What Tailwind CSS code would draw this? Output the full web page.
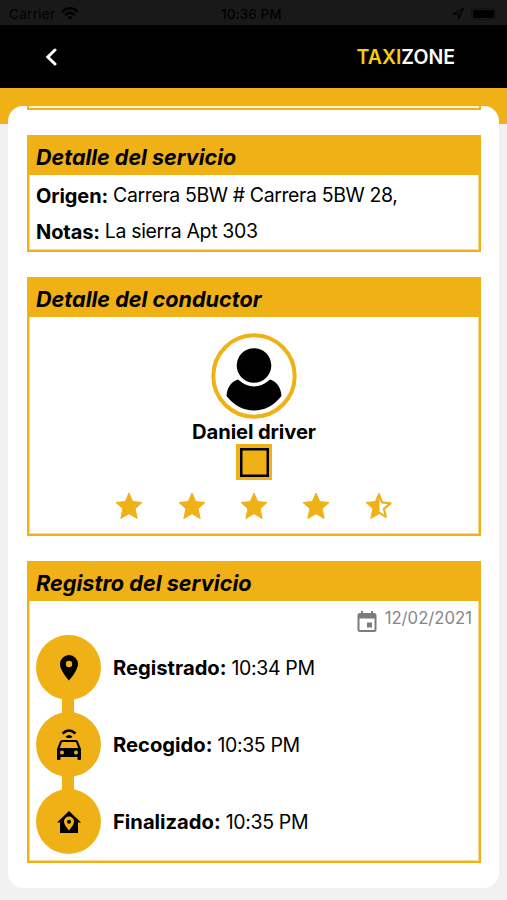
<!DOCTYPE html>
<html lang="es">
<head>
<meta charset="utf-8">
<title>TaxiZone</title>
<script src="https://cdn.jsdelivr.net/npm/@tailwindcss/browser@4"></script>
</head>
<body class="w-[507px] h-[900px] overflow-hidden bg-[#f1f1f1] font-['Inter','Liberation_Sans',sans-serif] text-black">
<div class="relative h-[25px] bg-[#191919] flex items-center justify-between pl-[9px] pr-[9px] pt-[3px] text-[13.5px] text-black">
  <div class="flex items-center gap-[6px]">
    <span class="tracking-[0.3px]">Carrier</span>
    <svg width="18" height="14" viewBox="0 0 18 14" fill="none" stroke="#000" stroke-width="2.5"><path d="M1 5Q9 -2.400 17 5M4 8.200Q9 3.500 14 8.200"/><path d="M6.300 10.300Q9 8.400 11.700 10.300L9 13Z" fill="#000" stroke="none"/></svg>
  </div>
  <span class="absolute left-[221px] font-medium tracking-[0.1px] whitespace-nowrap">10:36 PM</span>
  <div class="flex items-center gap-[7px]">
    <svg width="12" height="12" viewBox="0 0 12 12" fill="none" stroke="#000" stroke-width="1.200"><path d="M1 6L11 1L6.500 11V6Z"/></svg>
    <svg width="27" height="12" viewBox="0 0 27 12"><rect x=".5" y=".5" width="24" height="11" rx="3" fill="none" stroke="#121212"/><rect x="2" y="2" width="21" height="8" rx="1.500"/><path d="M25.500 4Q27 6 25.500 8Z" fill="#121212"/></svg>
  </div>
</div>
<header class="h-[63px] bg-black flex items-center justify-between pl-[45px] pr-[52px]">
  <svg width="12" height="18" viewBox="0 0 12 18" fill="none" stroke="#fff" stroke-width="3" stroke-linecap="round"><path d="M10 2L2.800 9L10 16"/></svg>
  <div class="pt-[2px] text-[19.500px] leading-none font-semibold text-white"><span class="text-[#f5cd13]">TAXI</span>ZONE</div>
</header>
<div class="h-[36px] bg-[#f0b117] px-[8px] pt-[18px]">
  <main class="h-[782px] bg-white rounded-[15px] px-[19px] overflow-hidden">
    <div class="h-[4px] w-[454px] border-x-[2px] border-b-[2px] border-[#f0b117] bg-[#fff3cf]"></div>
    <section class="mt-[25px] h-[117px] w-[454px] border-2 border-[#f0b117] shadow-[inset_0_0_0_1px_#f8d98e]">
      <h2 class="h-[38px] bg-[#f0b117] pl-[7px] pt-[2px] flex items-center text-[21.500px] font-bold italic whitespace-nowrap">Detalle del servicio</h2>
      <p class="mt-[2px] h-[37px] pl-[7px] flex items-center gap-[5px] text-[20px] whitespace-nowrap"><b class="font-bold tracking-[-0.1px]">Origen:</b><span class="text-[19.500px] tracking-[-0.390px]">Carrera 5BW # Carrera 5BW 28,</span></p>
      <p class="h-[36px] pl-[7px] flex items-center gap-[5px] text-[20px] whitespace-nowrap"><b class="font-bold tracking-[-0.1px]">Notas:</b><span class="text-[19.500px] tracking-[-0.360px]">La sierra Apt 303</span></p>
    </section>
    <section class="mt-[25px] h-[259px] w-[454px] border-2 border-[#f0b117] shadow-[inset_0_0_0_1px_#f8d98e]">
      <h2 class="h-[38px] bg-[#f0b117] pl-[7px] pt-[2px] flex items-center text-[21.600px] font-bold italic whitespace-nowrap">Detalle del conductor</h2>
      <div class="flex flex-col items-center pt-[16px]">
        <svg width="86" height="86" viewBox="0 0 86 86"><circle cx="43" cy="43" r="40.700" fill="#fff" stroke="#f0b117" stroke-width="4"/><circle cx="43" cy="32.500" r="17.300"/><path d="M27 46.500Q43 60.500 59 46.500C66 48.500 70 55 70.500 63Q59 77.500 43 77.500T15.500 63C16 55 20 48.500 27 46.500Z"/></svg>
        <div class="mt-px h-[24px] leading-[24px] text-[20.200px] font-bold tracking-[-0.1px] whitespace-nowrap">Daniel driver</div>
        <div class="size-[36px] bg-[#f0b117] grid place-items-center"><div class="size-[29px] border-2 border-black shadow-[inset_0_0_0_0.5px_black]"></div></div>
        <div class="mt-[12px] flex gap-[34.300px]">
          <svg width="28" height="28" viewBox="0 0 28 28" fill="#f0b117" stroke="#f0b117" stroke-linejoin="round"><path d="M14 1L17.700 9.600L27 10.500L20.100 16.700L22.200 26.500L14 21.700L5.800 26.500L7.900 16.700L1 10.500L10.300 9.600Z"/></svg>
          <svg width="28" height="28" viewBox="0 0 28 28" fill="#f0b117" stroke="#f0b117" stroke-linejoin="round"><path d="M14 1L17.700 9.600L27 10.500L20.100 16.700L22.200 26.500L14 21.700L5.800 26.500L7.900 16.700L1 10.500L10.300 9.600Z"/></svg>
          <svg width="28" height="28" viewBox="0 0 28 28" fill="#f0b117" stroke="#f0b117" stroke-linejoin="round"><path d="M14 1L17.700 9.600L27 10.500L20.100 16.700L22.200 26.500L14 21.700L5.800 26.500L7.900 16.700L1 10.500L10.300 9.600Z"/></svg>
          <svg width="28" height="28" viewBox="0 0 28 28" fill="#f0b117" stroke="#f0b117" stroke-linejoin="round"><path d="M14 1L17.700 9.600L27 10.500L20.100 16.700L22.200 26.500L14 21.700L5.800 26.500L7.900 16.700L1 10.500L10.300 9.600Z"/></svg>
          <svg width="28" height="28" viewBox="0 0 28 28" fill="#f0b117" stroke="#f0b117" stroke-linejoin="round"><path d="M14 1L10.300 9.600L1 10.500L7.900 16.700L5.800 26.500L14 21.700Z"/><path d="M14 2.500L17 10.400L25.500 11.300L18.900 16.800L20.800 24.800L14 20.600" fill="none" stroke-width="2.200"/></svg>
        </div>
      </div>
    </section>
    <section class="mt-[25px] h-[302px] w-[454px] border-2 border-[#f0b117] shadow-[inset_0_0_0_1px_#f8d98e]">
      <h2 class="h-[38px] bg-[#f0b117] pl-[7px] pt-[2px] flex items-center text-[21.700px] font-bold italic whitespace-nowrap">Registro del servicio</h2>
      <div class="h-[34px] pr-[7px] flex justify-end gap-[8px] text-[#858585]">
        <svg class="mt-[10px]" width="20" height="22" viewBox="0 0 20 22" fill="none" stroke="#7b7b7b" stroke-width="2"><rect x="1.500" y="3" width="17" height="17" rx="1.500"/><path d="M1 5.500H19" stroke-width="4"/><path d="M5 0V4M15 0V4"/><path d="M10 11.500H15V16.500H10Z" fill="#7b7b7b" stroke="none"/></svg>
        <span class="pt-[4px] text-[16.700px] leading-[26px]">12/02/2021</span>
      </div>
      <div class="pl-[7px]">
        <div class="flex items-center gap-[13px]">
          <div class="size-[65px] rounded-full bg-[#f0b117] grid place-items-center"><svg width="18" height="26" viewBox="0 0 18 26"><path fill-rule="evenodd" d="M9 0A9 9 0 0 0 0 9C0 15.500 9 25.500 9 25.500S18 15.500 18 9A9 9 0 0 0 9 0ZM9 5.800A3.200 3.200 0 1 1 9 12.200A3.200 3.200 0 1 1 9 5.800Z"/></svg></div>
          <p class="-ml-px pt-[2px] flex items-baseline gap-[5px] text-[20.200px] whitespace-nowrap"><b class="font-bold">Registrado:</b><span class="text-[19.500px] tracking-[-0.350px]">10:34 PM</span></p>
        </div>
        <div class="ml-[26px] -my-px w-[12px] h-[14px] bg-[#f0b117]"></div>
        <div class="flex items-center gap-[13px]">
          <div class="size-[65px] rounded-full bg-[#f0b117] grid place-items-center"><svg width="24" height="32" viewBox="0 0 24 32"><path d="M5.500 4.500Q12 -1.500 18.500 4.500" fill="none" stroke="#000" stroke-width="2.500"/><path d="M8.500 7.500Q12 4.500 15.500 7.500L14 9H10Z"/><path fill-rule="evenodd" d="M5 11H19Q20.500 11 21 12.500L24 20V30Q24 31 23 31H21.500Q20.500 31 20.500 30V28H3.500V30Q3.500 31 2.500 31H1Q0 31 0 30V20L3 12.500Q3.500 11 5 11ZM5 13L2.800 19H21.200L19 13ZM5 21.500A2 2 0 1 0 5 25.500A2 2 0 1 0 5 21.500ZM19 21.500A2 2 0 1 0 19 25.500A2 2 0 1 0 19 21.500Z"/></svg></div>
          <p class="-ml-px pt-[2px] flex items-baseline gap-[5px] text-[20.200px] whitespace-nowrap"><b class="font-bold">Recogido:</b><span class="text-[19.500px] tracking-[-0.350px]">10:35 PM</span></p>
        </div>
        <div class="ml-[26px] -my-px w-[12px] h-[14px] bg-[#f0b117]"></div>
        <div class="flex items-center gap-[13px]">
          <div class="size-[65px] rounded-full bg-[#f0b117] grid place-items-center"><svg width="24" height="22" viewBox="0 0 24 22"><path fill-rule="evenodd" d="M12 0L24 11.500H21V22H3V11.500H0ZM12 5.500A5 5 0 0 0 7 10.500C7 14 12 19.500 12 19.500S17 14 17 10.500A5 5 0 0 0 12 5.500Z"/><circle cx="12" cy="10.700" r="2"/></svg></div>
          <p class="-ml-px pt-[2px] flex items-baseline gap-[5px] text-[20.200px] whitespace-nowrap"><b class="font-bold">Finalizado:</b><span class="text-[19.500px] tracking-[-0.350px]">10:35 PM</span></p>
        </div>
      </div>
    </section>
  </main>
</div>
</body>
</html>
